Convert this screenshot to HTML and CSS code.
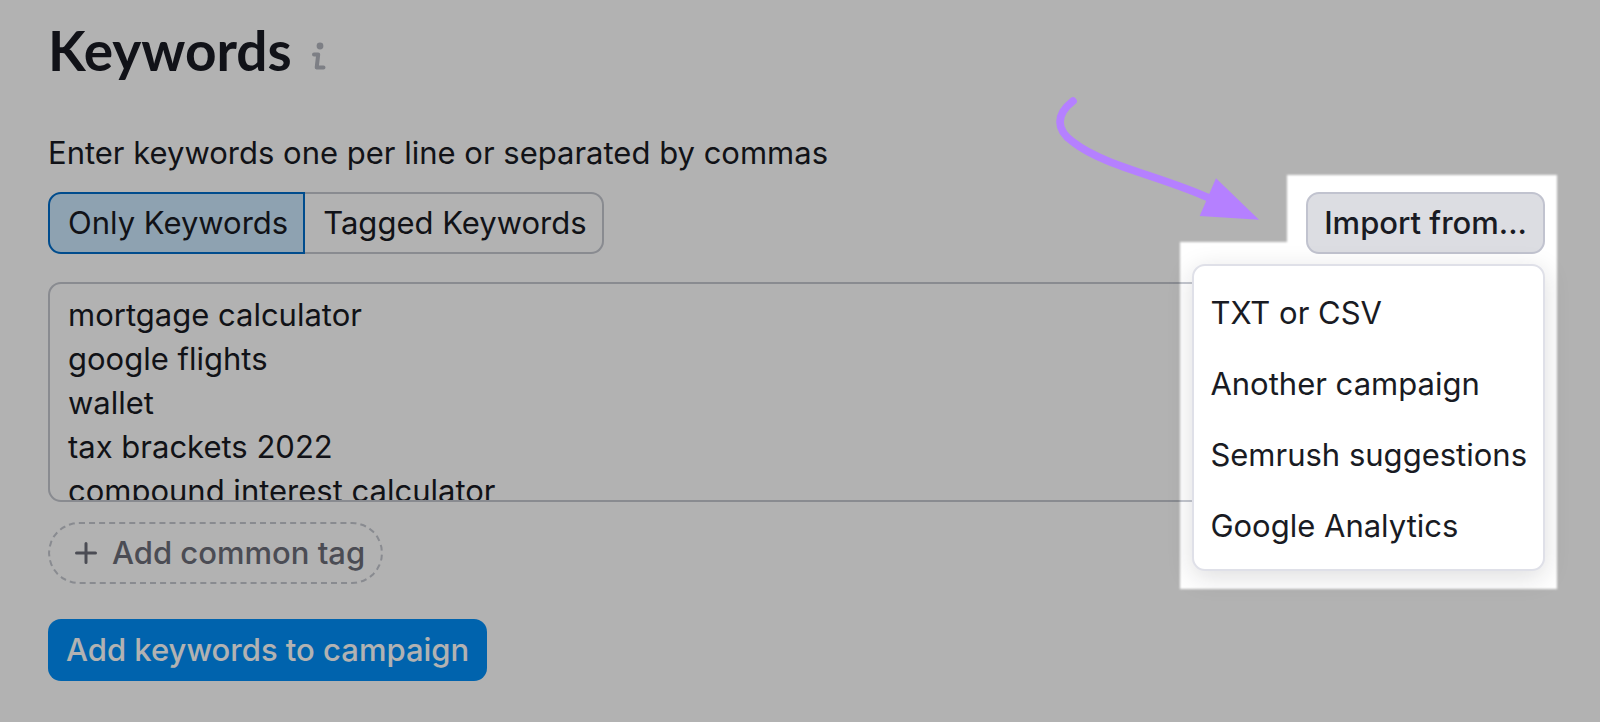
FILE: index.html
```html
<!DOCTYPE html>
<html lang="en">
<head>
    <meta charset="UTF-8">
    <meta name="viewport" content="width=device-width, initial-scale=1.0">
    <title>Keywords</title>
    <link rel="stylesheet" href="styles.css">
</head>
<body>
    <main class="page">
        <header class="header">
            <h1>Keywords</h1>
            <svg class="info" viewBox="0 0 14 28" role="img" aria-label="Info">
                <circle cx="8" cy="4" r="3.4"/>
                <path d="M2 12.5h4.2L4.7 25.4H11.5" fill="none" stroke-width="4" stroke-linecap="round" stroke-linejoin="round"/>
            </svg>
        </header>

        <label class="hint" for="keywords">Enter keywords one per line or separated by commas</label>

        <div class="toolbar">
            <div class="pills">
                <label class="pill">
                    <input type="radio" name="mode" checked>
                    <span>Only Keywords</span>
                </label>
                <label class="pill">
                    <input type="radio" name="mode">
                    <span>Tagged Keywords</span>
                </label>
            </div>

            <div class="import">
                <button class="import-button" type="button">Import from...</button>
                <div class="menu">
                    <button type="button">TXT or CSV</button>
                    <button type="button">Another campaign</button>
                    <button type="button">Semrush suggestions</button>
                    <button type="button">Google Analytics</button>
                </div>
            </div>
        </div>

        <textarea class="keywords" id="keywords" spellcheck="false">mortgage calculator
google flights
wallet
tax brackets 2022
compound interest calculator</textarea>

        <button class="tag-button" type="button">
            <svg class="plus" viewBox="0 0 22 22">
                <path d="M11 1.5v19M1.5 11h19" stroke-width="3" stroke-linecap="round"/>
            </svg>
            Add common tag
        </button>

        <button class="submit-button" type="button">Add keywords to campaign</button>
    </main>

    <!-- Dimmed layer with a cut-out around the import menu -->
    <div class="dim"><div class="dim-shape"></div></div>

    <svg class="arrow" viewBox="70 45 630 381">
        <path d="M130 63C78 104 78 148 130 186C222 258 400 290 540 355" fill="none" stroke="#b580ff" stroke-width="23" stroke-linecap="round"/>
        <path d="M559 295L688 419L510 408Z" fill="#b580ff"/>
    </svg>
</body>
</html>
```
FILE: styles.css
```css
* {
    box-sizing: border-box;
}

body {
    margin: 0;
    min-height: 100vh;
    position: relative;
    overflow: hidden;
    background-color: #fff;
    color: #191b23;
    font-family: Inter, "Liberation Sans", sans-serif;
    font-size: 31px;
    line-height: 44px;
}

button,
textarea {
    margin: 0;
    font: inherit;
    color: inherit;
}

button {
    cursor: pointer;
}

.page {
    display: flex;
    flex-direction: column;
    align-items: flex-start;
    padding: 16px 55px 40px 48px;
}

/* Title */
.header {
    display: flex;
    align-items: center;
    gap: 20px;
    height: 68px;
}

h1 {
    margin: 0;
    font-family: Lato, sans-serif;
    font-size: 55px;
    font-weight: 700;
    line-height: 68px;
}

.info {
    width: 14px;
    height: 28px;
    margin-top: 12px;
    fill: #b3b6bf;
    stroke: #b3b6bf;
    stroke-width: 0;
}

.hint {
    margin-top: 47px;
}

/* Mode switch and import */
.toolbar {
    display: flex;
    justify-content: space-between;
    width: 100%;
    margin-top: 17px;
}

.pills {
    display: flex;
}

.pill input {
    position: absolute;
    opacity: 0;
}

.pill span {
    display: block;
    padding: 7px 15px 7px 18px;
    border: 2px solid #c4c7cf;
    cursor: pointer;
}

.pill:first-child span {
    border-radius: 13px 0 0 13px;
}

.pill:last-child span {
    border-left: none;
    border-radius: 0 13px 13px 0;
}

.pill input:checked + span {
    background-color: #cce8fe;
    border-color: #006dca;
}

.import {
    position: relative;
}

.import-button {
    height: 62px;
    padding: 0 16px;
    border: 2px solid #c1c3cf;
    border-radius: 13px;
    background-color: #dcdde2;
    font-weight: 500;
}

.menu {
    position: absolute;
    top: 72px;
    right: 0;
    z-index: 1;
    display: flex;
    flex-direction: column;
    padding: 11px 0 8px;
    border: 2px solid #dfe0e8;
    border-radius: 13px;
    background-color: #fff;
    box-shadow: 0 6px 26px rgba(25, 27, 35, 0.15);
}

.menu button {
    height: 71px;
    padding: 0 16px;
    border: none;
    background: none;
    text-align: left;
    white-space: nowrap;
}

.keywords {
    width: 100%;
    height: 220px;
    margin-top: 28px;
    padding: 9px 18px;
    border: 2px solid #c4c7cf;
    border-radius: 13px;
    background-color: #fff;
    overflow: hidden;
    resize: none;
}

/* Bottom buttons */
.tag-button {
    display: flex;
    align-items: center;
    gap: 15px;
    height: 62px;
    margin-top: 20px;
    padding: 0 16px 0 25px;
    border: 2px dashed #c4c7cf;
    border-radius: 31px;
    background: none;
    color: #6c6e79;
    font-weight: 500;
}

.plus {
    width: 22px;
    height: 22px;
    stroke: #6c6e79;
}

.submit-button {
    height: 62px;
    margin-top: 35px;
    padding: 0 18px;
    border: none;
    border-radius: 13px;
    background-color: #008ff8;
    color: #fff;
    font-weight: 500;
}

/* Overlay */
.dim {
    position: absolute;
    inset: -10px;
    z-index: 2;
    filter: blur(1px);
    pointer-events: none;
}

.dim-shape {
    height: 100%;
    background-color: rgba(0, 0, 0, 0.3);
    clip-path: polygon(
        0 0, 100% 0, 100% 100%, 0 100%, 0 252px,
        calc(100% - 430px) 252px,
        calc(100% - 430px) 599px,
        calc(100% - 53px) 599px,
        calc(100% - 53px) 185px,
        calc(100% - 323px) 185px,
        calc(100% - 323px) 252px,
        0 252px
    );
}

.arrow {
    position: absolute;
    top: 95px;
    right: 337px;
    z-index: 3;
    width: 210px;
    height: 127px;
    pointer-events: none;
}
```
